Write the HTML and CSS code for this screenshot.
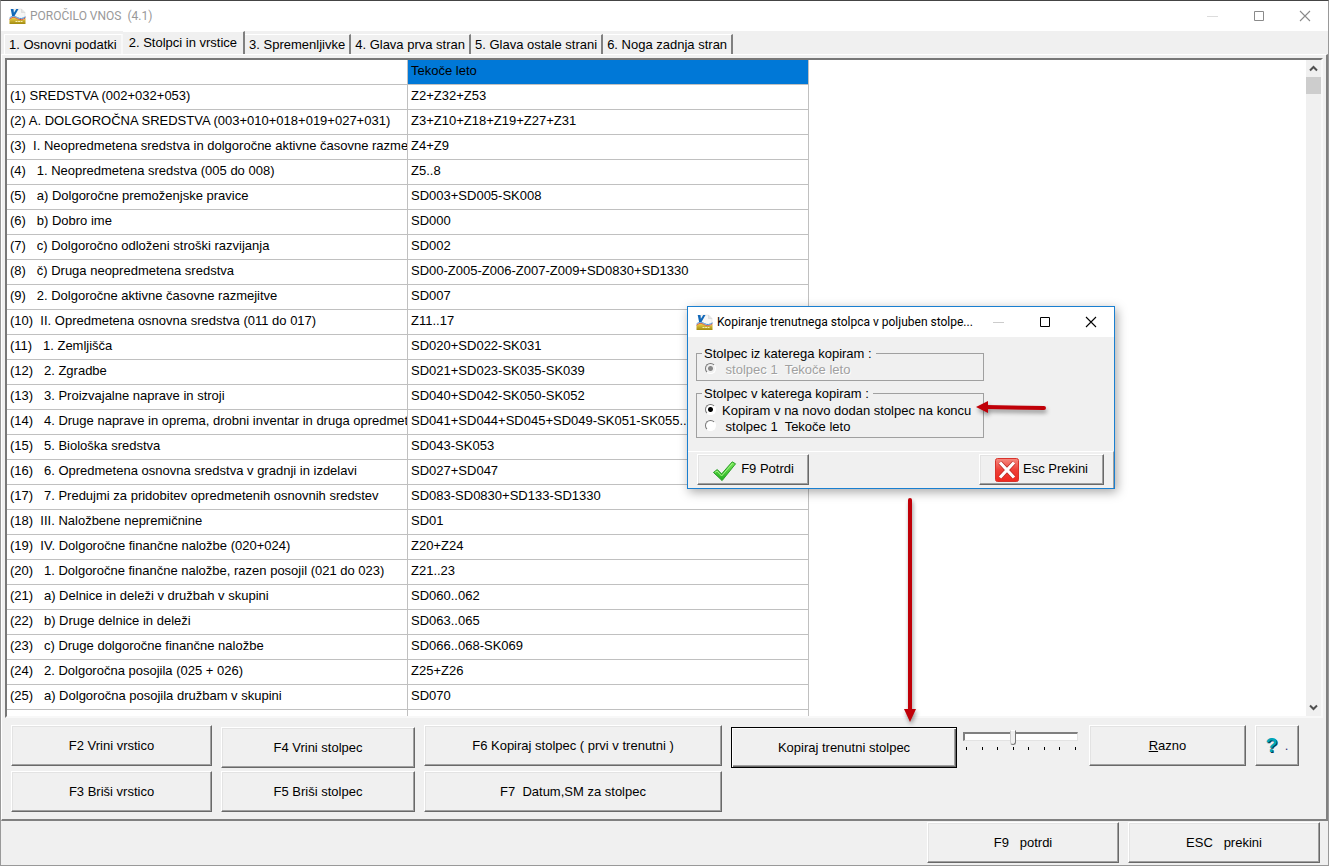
FILE: index.html
```html
<!DOCTYPE html>
<html lang="sl">
<head>
<meta charset="utf-8">
<title>POROČILO VNOS</title>
<link rel="stylesheet" href="styles.css">
</head>
<body>
<svg width="0" height="0" class="defs" aria-hidden="true">
  <defs>
    <linearGradient id="gold" x1="0" y1="0" x2="0" y2="1"><stop offset="0" stop-color="#f3d24a"/><stop offset="1" stop-color="#a08a10"/></linearGradient>
    <linearGradient id="green" x1="0" y1="0" x2="0" y2="1"><stop offset="0" stop-color="#7bea5a"/><stop offset="1" stop-color="#1fae1c"/></linearGradient>
    <linearGradient id="red" x1="0" y1="0" x2="0" y2="1"><stop offset="0" stop-color="#f58a80"/><stop offset="0.5" stop-color="#ee4038"/><stop offset="1" stop-color="#f0281f"/></linearGradient>
    <symbol id="app" viewBox="0 0 16 16">
      <path d="M5 1H12L15.500 4.500V12H3V3Z" fill="#f6f6f6" stroke="#d8d8d8" stroke-width=".5"/>
      <path d="M12 1V4.500H15.500" fill="#e4e4e4" stroke="#cfcfcf" stroke-width=".5"/>
      <path d="M0 11.500C3 9 5 9 8 11S13 12 16 10.500V16H0Z" fill="url(#gold)"/>
      <path d="M0 11.200C3 8.700 5 9 8 10.700S13 11.600 16 9.800" fill="none" stroke="#d2452e" stroke-width="1"/>
      <path d="M0 10C3 7.500 5 8 8 9.600S13 10.600 16 8.800" fill="none" stroke="#3e8fd2" stroke-width="1"/>
      <path d="M1.200 1H4L4.400 4.800L6.800 1H9L5 8H2.600Z" fill="#1268b8"/>
      <path d="M6 13.500H13" stroke="#f7eeb0" stroke-width="1.200" stroke-dasharray="2 .6"/>
    </symbol>
  </defs>
</svg>
<main class="window">
  <header class="titlebar">
    <svg class="app-icon"><use href="#app"/></svg>
    <h1 class="title">POROČILO VNOS  (4.1)</h1>
    <div class="caption-buttons">
      <button class="caption-btn" aria-label="Minimize"><svg viewBox="0 0 12 12"><path d="M0 6.500H11" stroke="#dcdcdc"/></svg></button>
      <button class="caption-btn" aria-label="Maximize"><svg viewBox="0 0 12 12"><path d="M1.500 1.500H10.500V10.500H1.500Z" fill="none" stroke="#8a8a8a"/></svg></button>
      <button class="caption-btn" aria-label="Close"><svg viewBox="0 0 12 12"><path d="M1 1L11 11M11 1L1 11" stroke="#8a8a8a" stroke-width="1.100"/></svg></button>
    </div>
  </header>

  <nav class="tabs" role="tablist">
    <button class="tab first" role="tab">1. Osnovni podatki</button>
    <button class="tab active" role="tab" aria-selected="true">2. Stolpci in vrstice</button>
    <button class="tab" role="tab">3. Spremenljivke</button>
    <button class="tab" role="tab">4. Glava prva stran</button>
    <button class="tab" role="tab">5. Glava ostale strani</button>
    <button class="tab" role="tab">6. Noga zadnja stran</button>
  </nav>

  <section class="page">
    <div class="grid-box">
      <div class="grid-view">
        <table class="grid">
          <thead><tr><th></th><th class="selected">Tekoče leto</th></tr></thead>
          <tbody>
            <tr><td>(1) SREDSTVA (002+032+053)</td><td>Z2+Z32+Z53</td></tr>
            <tr><td>(2) A. DOLGOROČNA SREDSTVA (003+010+018+019+027+031)</td><td>Z3+Z10+Z18+Z19+Z27+Z31</td></tr>
            <tr><td>(3)  I. Neopredmetena sredstva in dolgoročne aktivne časovne razmeji</td><td>Z4+Z9</td></tr>
            <tr><td>(4)   1. Neopredmetena sredstva (005 do 008)</td><td>Z5..8</td></tr>
            <tr><td>(5)   a) Dolgoročne premoženjske pravice</td><td>SD003+SD005-SK008</td></tr>
            <tr><td>(6)   b) Dobro ime</td><td>SD000</td></tr>
            <tr><td>(7)   c) Dolgoročno odloženi stroški razvijanja</td><td>SD002</td></tr>
            <tr><td>(8)   č) Druga neopredmetena sredstva</td><td>SD00-Z005-Z006-Z007-Z009+SD0830+SD1330</td></tr>
            <tr><td>(9)   2. Dolgoročne aktivne časovne razmejitve</td><td>SD007</td></tr>
            <tr><td>(10)  II. Opredmetena osnovna sredstva (011 do 017)</td><td>Z11..17</td></tr>
            <tr><td>(11)   1. Zemljišča</td><td>SD020+SD022-SK031</td></tr>
            <tr><td>(12)   2. Zgradbe</td><td>SD021+SD023-SK035-SK039</td></tr>
            <tr><td>(13)   3. Proizvajalne naprave in stroji</td><td>SD040+SD042-SK050-SK052</td></tr>
            <tr><td>(14)   4. Druge naprave in oprema, drobni inventar in druga opredmete</td><td>SD041+SD044+SD045+SD049-SK051-SK055..0</td></tr>
            <tr><td>(15)   5. Biološka sredstva</td><td>SD043-SK053</td></tr>
            <tr><td>(16)   6. Opredmetena osnovna sredstva v gradnji in izdelavi</td><td>SD027+SD047</td></tr>
            <tr><td>(17)   7. Predujmi za pridobitev opredmetenih osnovnih sredstev</td><td>SD083-SD0830+SD133-SD1330</td></tr>
            <tr><td>(18)  III. Naložbene nepremičnine</td><td>SD01</td></tr>
            <tr><td>(19)  IV. Dolgoročne finančne naložbe (020+024)</td><td>Z20+Z24</td></tr>
            <tr><td>(20)   1. Dolgoročne finančne naložbe, razen posojil (021 do 023)</td><td>Z21..23</td></tr>
            <tr><td>(21)   a) Delnice in deleži v družbah v skupini</td><td>SD060..062</td></tr>
            <tr><td>(22)   b) Druge delnice in deleži</td><td>SD063..065</td></tr>
            <tr><td>(23)   c) Druge dolgoročne finančne naložbe</td><td>SD066..068-SK069</td></tr>
            <tr><td>(24)   2. Dolgoročna posojila (025 + 026)</td><td>Z25+Z26</td></tr>
            <tr><td>(25)   a) Dolgoročna posojila družbam v skupini</td><td>SD070</td></tr>
            <tr><td>(26)   b) Druga dolgoročna posojila</td><td>SD074..078-SK079</td></tr>
          </tbody>
        </table>
      </div>
      <div class="scrollbar">
        <button class="scroll-btn" aria-label="Up"><svg viewBox="0 0 9 7"><path d="M1 5.500L4.500 2L8 5.500" fill="none" stroke="#505050" stroke-width="2"/></svg></button>
        <div class="scroll-thumb"></div>
        <button class="scroll-btn down" aria-label="Down"><svg viewBox="0 0 9 7"><path d="M1 1.500L4.500 5L8 1.500" fill="none" stroke="#505050" stroke-width="2"/></svg></button>
      </div>
    </div>

    <div class="actions">
      <div class="stack rows">
        <button class="btn">F2 Vrini vrstico</button>
        <button class="btn">F3 Briši vrstico</button>
      </div>
      <div class="stack columns low">
        <button class="btn">F4 Vrini stolpec</button>
        <button class="btn">F5 Briši stolpec</button>
      </div>
      <div class="stack copy">
        <button class="btn">F6 Kopiraj stolpec ( prvi v trenutni )</button>
        <button class="btn">F7  Datum,SM za stolpec</button>
      </div>
      <div class="stack current low">
        <button class="btn default">Kopiraj trenutni stolpec</button>
      </div>
      <div class="slider">
        <input type="range" min="0" max="7" value="3" aria-label="Širina stolpca">
        <div class="ticks"><i></i><i></i><i></i><i></i><i></i><i></i><i></i><i></i></div>
      </div>
      <div class="stack misc"><button class="btn"><span><u>R</u>azno</span></button></div>
      <div class="stack help"><button class="btn"><span class="mark">?</span><span class="dot">.</span></button></div>
    </div>
  </section>

  <footer class="footer">
    <button class="btn">F9   potrdi</button>
    <button class="btn">ESC   prekini</button>
  </footer>

  <section class="dialog" role="dialog" aria-labelledby="dlg-title">
    <header class="dlg-bar">
      <svg class="app-icon"><use href="#app"/></svg>
      <h2 class="dlg-title" id="dlg-title">Kopiranje trenutnega stolpca v poljuben stolpe...</h2>
      <div class="caption-buttons">
        <button class="caption-btn" aria-label="Minimize"><svg viewBox="0 0 12 12"><path d="M0 6.500H11" stroke="#ccc"/></svg></button>
        <button class="caption-btn" aria-label="Maximize"><svg viewBox="0 0 12 12"><path d="M1.500 1.500H10.500V10.500H1.500Z" fill="none" stroke="#000"/></svg></button>
        <button class="caption-btn" aria-label="Close"><svg viewBox="0 0 12 12"><path d="M1 1L11 11M11 1L1 11" stroke="#000" stroke-width="1.100"/></svg></button>
      </div>
    </header>
    <div class="dlg-body">
      <fieldset class="group" disabled>
        <legend>Stolpec iz katerega kopiram :</legend>
        <label class="option"><input type="radio" name="source" checked><span> stolpec 1  Tekoče leto</span></label>
      </fieldset>
      <fieldset class="group target">
        <legend>Stolpec v katerega kopiram :</legend>
        <label class="option"><input type="radio" name="target" checked><span>Kopiram v na novo dodan stolpec na koncu</span></label>
        <label class="option"><input type="radio" name="target"><span> stolpec 1  Tekoče leto</span></label>
      </fieldset>
    </div>
    <div class="dlg-foot">
      <button class="btn ok">
        <svg viewBox="0 0 26 22"><path d="M1.500 12.500L5.500 9.500L10 14L21 1.500L24.500 3.500L10.500 21Z" fill="url(#green)" stroke="#249a22" stroke-width="1" stroke-linejoin="round"/><path d="M3 12.500L5.300 11L10 16.200L21.300 3" fill="none" stroke="#a9f58c" stroke-width="1"/></svg>
        <span>F9 Potrdi</span>
      </button>
      <button class="btn cancel">
        <svg viewBox="0 0 24 24"><rect x=".5" y=".5" width="23" height="23" rx="2" fill="url(#red)" stroke="#d8332c"/><path d="M5 4.500L19 19.500M19 4.500L5 19.500" stroke="#b82a24" stroke-width="4.600"/><path d="M5 4.500L19 19.500M19 4.500L5 19.500" stroke="#fff" stroke-width="3.200"/></svg>
        <span>Esc Prekini</span>
      </button>
    </div>
  </section>

  <svg class="arrow left" viewBox="0 0 76 20" aria-hidden="true"><path d="M11 9L69 10" stroke="#c00008" stroke-width="4" stroke-linecap="round"/><path d="M1 9L13 3V15Z" fill="#c00008"/></svg>
  <svg class="arrow down" viewBox="0 0 20 230" aria-hidden="true"><path d="M10 4V215" stroke="#c00008" stroke-width="4" stroke-linecap="round"/><path d="M10 226L4 213H16Z" fill="#c00008"/></svg>
</main>
</body>
</html>
```

FILE: styles.css
```css
* { box-sizing: border-box; }

body {
  margin: 0;
  background: #f0f0f0;
  color: #000;
  font-family: "Liberation Sans", Arial, sans-serif;
  font-size: 13px;
  line-height: 15px;
}

button {
  margin: 0;
  padding: 0;
  border: 0;
  background: none;
  color: inherit;
  font: inherit;
  white-space: pre;
}

.defs { position: absolute; }

.window {
  position: relative;
  display: flex;
  flex-direction: column;
  height: 100vh;
  min-width: 1320px;
  border: 1px solid #999;
  border-top-color: #444;
  background: #f0f0f0;
}

/* Title bars */
.titlebar, .dlg-bar {
  display: flex;
  align-items: center;
  height: 30px;
  padding-left: 8px;
  background: #fff;
  font-family: Roboto, "Open Sans", sans-serif;
}
.titlebar { flex: none; }
.app-icon { flex: none; width: 17px; height: 16px; }
.title, .dlg-title {
  margin: 0 0 0 4px;
  flex: 1;
  min-width: 0;
  font-size: 12px;
  font-weight: 400;
  white-space: pre;
}
.title { color: #999; }
.caption-buttons { display: flex; flex: none; }
.caption-btn {
  display: flex;
  align-items: center;
  justify-content: center;
  width: 46px;
  height: 28px;
}
.caption-btn svg { width: 12px; height: 12px; }

/* Tabs */
.tabs {
  display: flex;
  flex: none;
  align-items: flex-end;
  height: 23px;
  padding-left: 3px;
}
.tab {
  height: 20px;
  padding: 0 4px;
  border-top: 1px solid #fff;
  border-right: 2px solid #808080;
}
.tab.first { border-left: 1px solid #fff; border-right-color: #f8f8f8; }
.tab.active {
  height: 23px;
  padding: 0 6px 2px 6px;
}

/* Tab page */
.page {
  display: flex;
  flex: 1;
  flex-direction: column;
  min-height: 0;
  padding: 3px 2px 2px;
  border: 1px solid;
  border-width: 1px 2px 2px 1px;
  border-color: #fff #808080 #808080 #fff;
}
.grid-box {
  display: flex;
  flex: 1;
  min-height: 0;
  margin: 0 1px;
  border: 2px solid;
  border-color: #777 #f8f8f8 #f8f8f8 #777;
  background: #fff;
}
.grid-view { flex: 1; min-width: 0; overflow: hidden; }
.grid {
  width: 802px;
  border-collapse: separate;
  border-spacing: 0;
  table-layout: fixed;
}
.grid th, .grid td {
  height: 25px;
  padding: 3px 0 6px 3px;
  border-right: 1px solid #c0c0c0;
  border-bottom: 1px solid #c0c0c0;
  overflow: hidden;
  font-weight: 400;
  text-align: left;
  white-space: pre;
}
.grid .selected { background: #0078d7; }

.scrollbar {
  display: flex;
  flex-direction: column;
  width: 15px;
  background: #f0f0f0;
}
.scroll-btn {
  display: flex;
  align-items: center;
  justify-content: center;
  height: 17px;
}
.scroll-btn svg { width: 9px; height: 7px; }
.scroll-btn.down { margin-top: auto; }
.scroll-thumb { width: 15px; height: 17px; background: #cdcdcd; }

/* Raised push buttons */
.btn {
  display: flex;
  align-items: center;
  justify-content: center;
  height: 41px;
  padding-bottom: 1px;
  border: 1px solid;
  border-color: #fff #696969 #696969 #fff;
  box-shadow: inset -1px -1px #a0a0a0, inset 1px 1px #e3e3e3;
  background: #f0f0f0;
}
.btn.default {
  border-color: #000;
  box-shadow: inset 1px 1px #fff, inset -1px -1px #696969, inset -2px -2px #a0a0a0;
}

.actions {
  display: flex;
  flex: none;
  height: 99px;
  padding: 7px 0 0 7px;
}
.stack { display: flex; flex-direction: column; gap: 5px; margin-right: 9px; }
.stack.low { padding-top: 2px; gap: 3px; }
.rows { width: 201px; }
.columns { width: 194px; }
.copy { width: 298px; }
.current { width: 226px; margin-right: 6px; }
.misc { width: 157px; }
.help { width: 44px; }
.mark {
  color: #00a5b8;
  font-size: 20px;
  font-weight: 700;
  text-shadow: 1px 1px #003c58;
}
.dot { margin-left: 7px; color: #337; }

.slider { width: 115px; margin-right: 11px; padding-top: 4px; }
.slider input {
  display: block;
  width: 100%;
  height: 15px;
  margin: 0 0 3px;
  appearance: none;
  background: none;
}
.slider input::-webkit-slider-runnable-track {
  height: 9px;
  border: 1px solid;
  border-width: 2px 1px 1px 2px;
  border-color: #808080 #e3e3e3 #e3e3e3 #808080;
  background: #fff;
}
.slider input::-webkit-slider-thumb {
  width: 6px;
  height: 15px;
  margin-top: -4px;
  appearance: none;
  border: 1px solid;
  border-color: #fff #777 #777 #ccc;
  border-radius: 0 0 3px 3px;
  background: #f0f0f0;
}
.ticks { display: flex; justify-content: space-between; padding: 0 2px 0 3px; }
.ticks i { width: 1px; height: 3px; background: #000; }

.footer {
  display: flex;
  flex: none;
  justify-content: flex-end;
  gap: 9px;
  height: 44px;
  padding: 1px 8px 0 0;
}
.footer .btn { width: 192px; }

/* Copy dialog */
.dialog {
  position: absolute;
  top: 305px;
  left: 686px;
  width: 428px;
  border: 1px solid #1a7fd0;
  background: #f0f0f0;
  box-shadow: 2px 3px 10px rgba(0, 0, 0, .35);
}
.dlg-body {
  display: flex;
  flex-direction: column;
  gap: 5px;
  padding: 9px 130px 13px 8px;
}
.group {
  margin: 0;
  padding: 0 0 3px 5px;
  border: 1px solid #a0a0a0;
}
.group.target { padding-top: 1px; }
.group legend { padding: 0 4px 0 2px; }
.option { display: flex; align-items: center; height: 16px; white-space: pre; }
.option input {
  flex: none;
  width: 11px;
  height: 11px;
  margin: 0 6px 2px 3px;
  appearance: none;
  border: 1px solid;
  border-color: #777 #fff #fff #777;
  border-radius: 50%;
  background: #fff;
}
.option input:checked { background: radial-gradient(circle, #000 0 2px, #fff 3px); }
.group:disabled .option { color: #a0a0a0; text-shadow: 1px 1px #fff; }
.group:disabled input { background: radial-gradient(circle, #888 0 2px, #f0f0f0 3px); }

.dlg-foot {
  display: flex;
  justify-content: space-between;
  padding: 2px 9px 3px 9px;
  border-top: 1px solid #fff;
  border-right: 1px solid #a0a0a0;
}
.dlg-foot .btn { height: 31px; gap: 4px; padding: 0; }
.dlg-foot span { padding-bottom: 2px; }
.ok { width: 112px; }
.ok svg { width: 25px; height: 22px; margin-top: 3px; }
.cancel { width: 125px; }
.cancel svg { width: 24px; height: 24px; }

/* Callout arrows over the form */
.arrow { position: absolute; filter: drop-shadow(1px 3px 2px rgba(0, 0, 0, .4)); }
.arrow.left { top: 397px; left: 974px; width: 76px; height: 20px; }
.arrow.down { top: 495px; left: 899px; width: 20px; height: 230px; }
```
